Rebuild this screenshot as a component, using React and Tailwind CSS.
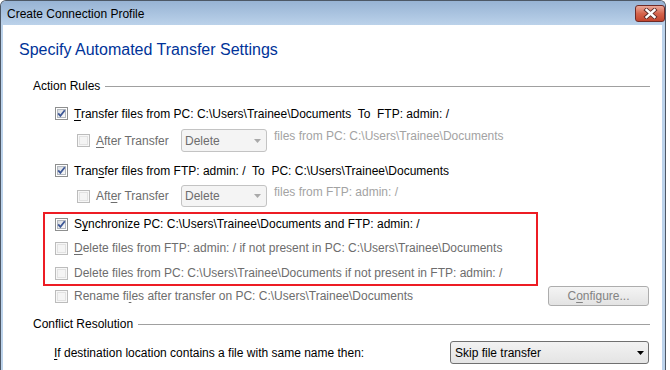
import React from 'react';

const U = ({ children }) => (
    <span className="underline decoration-1 underline-offset-[2px]">{children}</span>
);

const CheckBox = ({ checked, disabled }) => (
    <span
        className={`relative flex w-[13px] h-[13px] shrink-0 p-[1px] border ${disabled ? 'border-[#bcbcbc] bg-[#f7f7f7]' : 'border-[#8e8f8f] bg-white'
            }`}
    >
        <span
            className={`flex-1 border ${disabled
                ? 'border-[#e2e2e2] bg-[#f4f4f4]'
                : 'border-[#b4b9bf] bg-gradient-to-br from-[#d9dce1] to-[#fafafa]'
                }`}
        />
        {checked && (
            <svg className="absolute left-[-1px] top-[-1px]" width="13" height="13" viewBox="0 0 13 13">
                <path d="M3.2 6.4 L5.4 8.9 L9.8 3.3" fill="none" stroke="#3d5796" strokeWidth="1.8" strokeLinejoin="miter" />
            </svg>
        )}
    </span>
);

const Arrow = ({ color }) => (
    <svg width="7" height="4" viewBox="0 0 7 4">
        <path d="M0 0 H7 L3.5 4 Z" fill={color} />
    </svg>
);

const GroupHeader = ({ title, className }) => (
    <div className={`flex items-center h-[16px] pl-[14px] ${className}`}>
        <span className="text-[12px] leading-[16px] text-black">{title}</span>
        <span className="flex-1 h-px bg-[#a0a0a0] ml-[5px]" />
    </div>
);

const Row = ({ checked, disabled, children, className = '' }) => (
    <div className={`flex items-center ${className}`}>
        <CheckBox checked={checked} disabled={disabled} />
        <span
            className={`ml-[6px] text-[12px] leading-[14px] whitespace-pre ${disabled ? 'text-[#6d6d6d]' : 'text-black'}`}
        >
            {children}
        </span>
    </div>
);

const AfterRow = ({ label, files, className = '' }) => (
    <div className={`flex items-center pl-[58px] ${className}`}>
        <CheckBox disabled />
        <span className="ml-[6px] w-[85px] text-[12px] leading-[14px] text-[#6d6d6d]">{label}</span>
        <div className="w-[86px] h-full rounded-[3px] border border-[#c3c3c3] bg-[#f4f4f4] flex items-center justify-between pl-[3px] pr-[5px] text-[12px] text-[#6d6d6d]">
            Delete
            <Arrow color="#a9a9a9" />
        </div>
        <span className="self-start ml-[7px] text-[12px] leading-[14px] text-[#a3a3a3]">{files}</span>
    </div>
);

export default function App() {
    return (
        <div className="w-[670px] h-[370px] bg-white overflow-hidden font-['Liberation_Sans',Arial,sans-serif]">
            <div className="w-[666px] h-[370px] flex flex-col border-l border-t border-r border-[#4d5866] rounded-t-[6px] bg-[#bcd3eb]">
                {/* title bar */}
                <div className="h-[24px] flex items-start justify-between pl-[6px] bg-gradient-to-b from-[#97b3d4] to-[#bbd2ea] rounded-t-[5px]">
                    <span className="pt-[6px] text-[12px] leading-[14px] text-black">Create Connection Profile</span>
                    <div className="mt-[4px] w-[30px] h-[17px] rounded-[3px] border border-[#6e2b27] bg-gradient-to-b from-[#e9a899] via-[#d5654d] to-[#c2442d] flex items-center justify-center">
                        <svg width="15" height="11" viewBox="0 0 15 11">
                            <path d="M3.5 2 L11.5 9 M11.5 2 L3.5 9" stroke="#5a2a26" strokeWidth="4.2" strokeLinecap="square" />
                            <path d="M3.5 2 L11.5 9 M11.5 2 L3.5 9" stroke="#ffffff" strokeWidth="2.4" strokeLinecap="square" />
                        </svg>
                    </div>
                </div>

                {/* client area */}
                <div className="flex-1 bg-white ml-[2px] mr-[3px]">
                    <div className="pl-[16px] w-[647px]">
                        <div className="mt-[15px] h-[20px] text-[16px] leading-[20px] text-[#003399]">
                            Specify Automated Transfer Settings
                        </div>

                        <GroupHeader title="Action Rules" className="mt-[18px]" />

                        <Row checked className="mt-[8px] h-[23px] pl-[36px]">
                            <U>T</U>ransfer files from PC: C:\Users\Trainee\Documents  To  FTP: admin: /
                        </Row>
                        <AfterRow
                            className="mt-[4px] h-[23px]"
                            label={<><U>A</U>fter Transfer</>}
                            files="files from PC: C:\Users\Trainee\Documents"
                        />
                        <Row checked className="mt-[7px] h-[23px] pl-[36px]">
                            Tran<U>s</U>fer files from FTP: admin: /  To  PC: C:\Users\Trainee\Documents
                        </Row>
                        <AfterRow
                            className="mt-[3px] h-[22px]"
                            label={<>Aft<U>e</U>r Transfer</>}
                            files="files from FTP: admin: /"
                        />

                        <div className="mt-[5px] ml-[24px] w-[495px] h-[74px] border-2 border-[#ed1c24] pl-[10px]">
                            <Row checked className="h-[20px]">
                                S<U>y</U>nchronize PC: C:\Users\Trainee\Documents and FTP: admin: /
                            </Row>
                            <Row disabled className="mt-[2px] h-[24px]">
                                <U>D</U>elete files from FTP: admin: / if not present in PC: C:\Users\Trainee\Documents
                            </Row>
                            <Row disabled className="mt-[2px] h-[22px]">
                                Delete files from PC: C:\Users\Trainee\Documents if not present in FTP: admin: /
                            </Row>
                        </div>

                        <div className="h-[20px] flex items-center justify-between pl-[36px]">
                            <Row disabled>
                                Rename fi<U>l</U>es after transfer on PC: C:\Users\Trainee\Documents
                            </Row>
                            <div className="mr-[1px] w-[101px] h-[20px] rounded-[3px] border border-[#adadad] bg-gradient-to-b from-[#f4f4f4] to-[#e3e3e3] flex items-center justify-center text-[12px] text-[#838383]">
                                C<U>o</U>nfigure...
                            </div>
                        </div>

                        <GroupHeader title="Conflict Resolution" className="mt-[10px]" />

                        <div className="mt-[9px] h-[23px] flex items-center justify-between pl-[35px]">
                            <span className="text-[12px] leading-[14px] text-black">
                                <U>I</U>f destination location contains a file with same name then:
                            </span>
                            <div className="mr-[1px] w-[199px] h-full rounded-[3px] border border-[#707070] bg-gradient-to-b from-[#f2f2f2] to-[#e4e4e4] flex items-center justify-between pl-[4px] pr-[4px] text-[12px] text-black">
                                Skip file transfer
                                <Arrow color="#000000" />
                            </div>
                        </div>
                    </div>
                </div>
            </div>
        </div>
    );
}
